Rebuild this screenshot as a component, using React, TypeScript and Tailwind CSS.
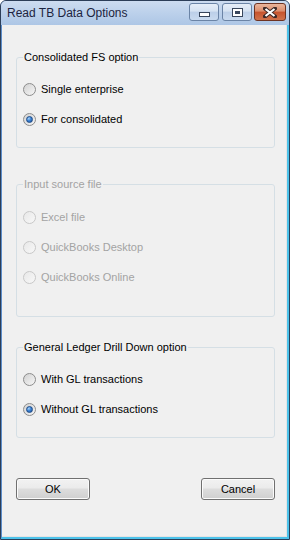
import React from "react";

type RadioProps = { label: string; checked?: boolean; disabled?: boolean };

const Radio = ({ label, checked, disabled }: RadioProps) => (
  <div className="flex items-center h-[16px]">
    <span
      className={`flex items-center justify-center w-[13px] h-[13px] rounded-full border ${
        disabled
          ? "border-[#c8c8c8] bg-[linear-gradient(135deg,#e8e8e8,#f8f8f8)]"
          : "border-[#8c8c8c] bg-[linear-gradient(135deg,#d2d2d2,#f6f6f6)]"
      }`}
    >
      {checked && (
        <span className="w-[7px] h-[7px] rounded-full border border-[#1d4a86] bg-[radial-gradient(circle_at_35%_30%,#a9d4fa_0%,#3d85d6_45%,#1a4d96_100%)]" />
      )}
    </span>
    <span className={`ml-[5px] ${disabled ? "text-[#a3a3a3]" : "text-black"}`}>
      {label}
    </span>
  </div>
);

type GroupProps = {
  title: string;
  disabled?: boolean;
  className?: string;
  children: React.ReactNode;
};

const Group = ({ title, disabled, className, children }: GroupProps) => (
  <fieldset
    className={`mx-[14px] w-[259px] border border-[#d5dfe5] rounded-[3px] pl-[6px] ${className ?? ""}`}
  >
    <legend
      className={`px-[1px] leading-[14px] ${disabled ? "text-[#a3a3a3]" : "text-black"}`}
    >
      {title}
    </legend>
    <div className="flex flex-col gap-[14px]">{children}</div>
  </fieldset>
);

const WinButton = ({ label }: { label: string }) => (
  <button className="w-[74px] h-[22px] rounded-[3px] border border-[#707070] bg-[linear-gradient(180deg,#f2f2f2_0%,#ebebeb_45%,#dddddd_50%,#cfcfcf_100%)] shadow-[inset_0_0_0_1px_#fbfbfb] text-black leading-[20px]">
    {label}
  </button>
);

export default function App() {
  return (
    <div className="w-[290px] h-[540px] flex flex-col border border-[#2c3e58] rounded-t-[6px] overflow-hidden bg-[#6d9bd3] font-['Liberation_Sans',Arial,sans-serif] text-[11px]">
      {/* Title bar */}
      <div className="h-[24px] flex justify-between bg-[linear-gradient(180deg,#cddcf0_0%,#bfd3ec_40%,#adc6e5_100%)]">
        <div className="pl-[6px] pt-[4px] text-[12px] leading-[16px] text-[#1c2440]">
          Read TB Data Options
        </div>
        <div className="flex items-start pr-[3px] pt-[2px]">
          <div className="w-[30px] h-[18px] flex items-end justify-center pb-[3px] rounded-[3px] border border-[#6b84a6] bg-[linear-gradient(180deg,#e6eef8_0%,#d5e2f2_45%,#bccfe8_50%,#c9daef_100%)]">
            <svg width="11" height="5" viewBox="0 0 11 5">
              <rect x="0.5" y="0.5" width="10" height="4" fill="#fff" stroke="#38465c" />
            </svg>
          </div>
          <div className="ml-[3px] w-[30px] h-[18px] flex items-center justify-center rounded-[3px] border border-[#6b84a6] bg-[linear-gradient(180deg,#e6eef8_0%,#d5e2f2_45%,#bccfe8_50%,#c9daef_100%)]">
            <svg width="11" height="9" viewBox="0 0 11 9">
              <rect x="0.5" y="0.5" width="10" height="8" fill="#fff" stroke="#38465c" />
              <rect x="3" y="3" width="5" height="3" fill="#38465c" />
            </svg>
          </div>
          <div className="ml-[2px] w-[32px] h-[18px] flex items-center justify-center rounded-[3px] border border-[#6e3322] bg-[linear-gradient(180deg,#eab59c_0%,#dc8d6c_45%,#c7532d_50%,#d0734c_100%)]">
            <svg width="14" height="11" viewBox="0 0 14 11">
              <path d="M2 1.5 L12 9.5 M12 1.5 L2 9.5" stroke="#3e2a28" strokeWidth="4" strokeLinecap="square" />
              <path d="M2.5 2 L11.5 9 M11.5 2 L2.5 9" stroke="#fff" strokeWidth="2.2" />
            </svg>
          </div>
        </div>
      </div>

      {/* Frame + client area */}
      <div className="flex-1 flex flex-col border-l border-l-[#5d8ecb] border-r-2 border-r-[#4cc2ea] border-b-2 border-b-[#4cc2ea]">
        <div className="flex-1 flex flex-col bg-[#f0f0f0] border-r border-b border-[#e4e4e4]">
          <Group title="Consolidated FS option" className="mt-[25px] pt-[17px] pb-[20px]">
            <Radio label="Single enterprise" />
            <Radio label="For consolidated" checked />
          </Group>

          <Group title="Input source file" disabled className="mt-[29px] pt-[18px] pb-[31px]">
            <Radio label="Excel file" disabled />
            <Radio label="QuickBooks Desktop" disabled />
            <Radio label="QuickBooks Online" disabled />
          </Group>

          <Group title="General Ledger Drill Down option" className="mt-[23px] pt-[17px] pb-[20px]">
            <Radio label="With GL transactions" />
            <Radio label="Without GL transactions" checked />
          </Group>

          <div className="mt-[40px] mx-[14px] w-[259px] flex justify-between">
            <WinButton label="OK" />
            <WinButton label="Cancel" />
          </div>
        </div>
      </div>
    </div>
  );
}
